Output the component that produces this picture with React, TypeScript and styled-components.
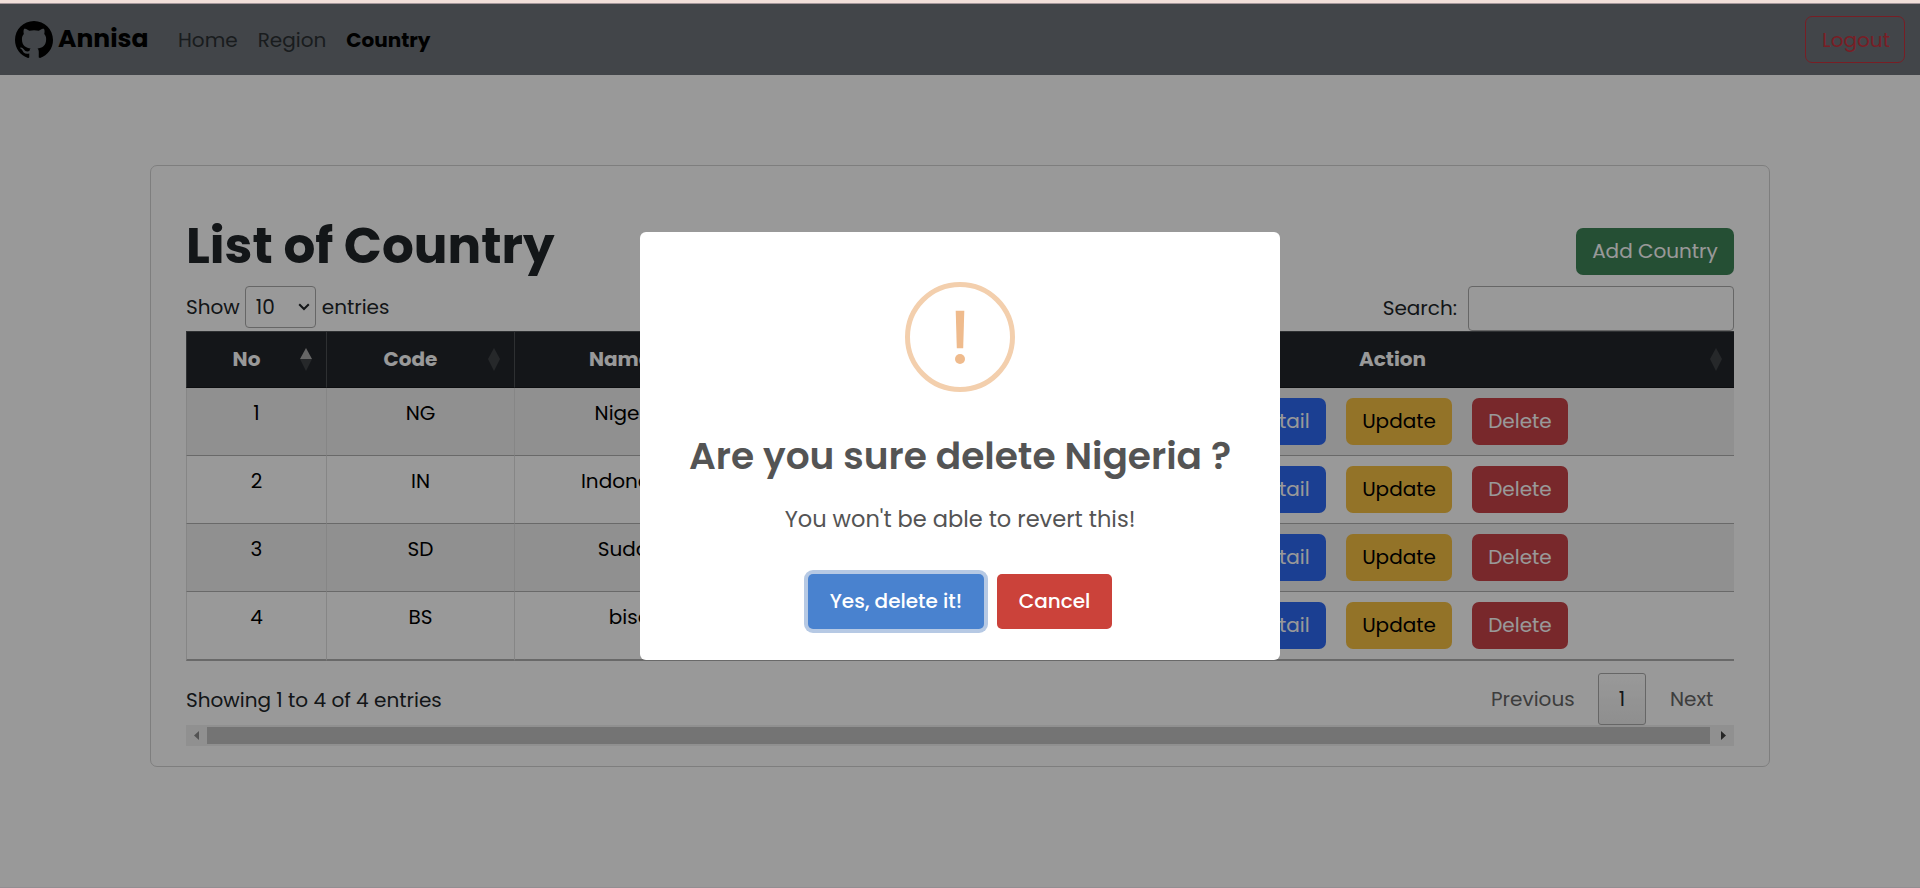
import React from 'react';
import styled, { createGlobalStyle } from 'styled-components';
import { BsGithub } from 'react-icons/bs';

const GlobalStyle = createGlobalStyle`
  *, *::before, *::after { box-sizing: border-box; }
  body {
    margin: 0;
    background: #fff;
    color: #212529;
    font: 400 20px/30px Poppins, Inter, "Open Sans", sans-serif;
    overflow: hidden;
  }
  h1, h2, p { margin: 0; }
  button, select, input {
    font: inherit;
    color: inherit;
  }
`;

const Page = styled.div`
  display: flex;
  flex-direction: column;
  height: 888px;
`;

const TopStrip = styled.div`
  flex: none;
  height: 4px;
  background: #f1dfd9;
  border-bottom: 1px solid #a4969a;
`;

const Navbar = styled.nav`
  flex: none;
  display: flex;
  align-items: center;
  height: 71px;
  padding: 0 15px;
  background: #6e747a;
`;

const Brand = styled.a`
  display: flex;
  align-items: center;
  gap: 5px;
  width: 163px;
  color: #000;
  font-size: 25px;
  font-weight: 700;

  span { margin-top: -2px; }
`;

const NavLinks = styled.div`
  display: flex;
  gap: 20px;
  flex: 1;
`;

const NavLink = styled.a<{ $active?: boolean }>`
  color: ${(p) => (p.$active ? '#000' : '#2b2f32')};
  font-weight: ${(p) => (p.$active ? 700 : 400)};
`;

const LogoutButton = styled.button`
  width: 100px;
  height: 47px;
  padding: 0 0 0 2px;
  border: 1px solid #c8323f;
  border-radius: 7px;
  background: transparent;
  color: #c8323f;
`;

const Main = styled.main`
  flex: 1;
  padding: 90px 150px 0;
  border-bottom: 1px solid #f3edf3;
`;

const Card = styled.section`
  height: 602px;
  padding: 49px 35px 0;
  border: 1px solid #d3d3d3;
  border-radius: 7px;
`;

const TitleRow = styled.header`
  display: flex;
  justify-content: space-between;
  align-items: flex-end;
  height: 60px;
`;

const Title = styled.h1`
  margin-bottom: -1px;
  font-size: 50px;
  font-weight: 700;
  line-height: 60px;
`;

const tones = {
  success: { bg: '#3f8458', fg: '#fff' },
  primary: { bg: '#2e69f3', fg: '#fff' },
  warning: { bg: '#f6c043', fg: '#000' },
  danger: { bg: '#c94349', fg: '#fff' },
};

const Button = styled.button<{ $tone: keyof typeof tones; $width: number }>`
  width: ${(p) => p.$width}px;
  height: 47px;
  padding: 0 0 1px;
  border: 0;
  border-radius: 7px;
  background: ${(p) => tones[p.$tone].bg};
  color: ${(p) => tones[p.$tone].fg};
`;

const Controls = styled.div`
  display: flex;
  justify-content: space-between;
  height: 45px;
  margin-top: 11px;
`;

const LengthControl = styled.label`
  display: flex;
  align-items: center;
  height: 42px;
  gap: 5px;

  span:last-child { margin-left: 1px; }
`;

const LengthSelect = styled.div`
  display: flex;
  align-items: center;
  justify-content: space-between;
  width: 71px;
  height: 42px;
  padding: 0 5px 0 10px;
  border: 1px solid #aaa;
  border-radius: 4px;
`;

const SearchControl = styled.label`
  display: flex;
  align-items: center;
  gap: 11px;

  span { padding-bottom: 1px; }
`;

const SearchInput = styled.input`
  width: 266px;
  height: 45px;
  border: 1px solid #aaa;
  border-radius: 4px;
  background: transparent;
`;

const Table = styled.table`
  width: 1548px;
  table-layout: fixed;
  border-collapse: separate;
  border-spacing: 0;
  text-align: center;
  color: #000;
`;

const HeadCell = styled.th<{ $width: number }>`
  position: relative;
  width: ${(p) => p.$width}px;
  height: 57px;
  padding: 0 20px 2px 0;
  border: solid #4d5154;
  border-width: 1px 0 0 1px;
  border-bottom: 1px solid #16181b;
  background: #22252a;
  color: #fff;
  font-weight: 700;

  &:nth-child(n + 4) { border-left-color: #22252a; }
  &:last-child svg { right: 12px; }
  svg { position: absolute; right: 14px; top: 16px; }
`;

const Row = styled.tr`
  &:nth-child(odd) { background: #f0f0f0; }
  &:last-child td { height: 69px; border-bottom-width: 2px; }
`;

const Cell = styled.td`
  height: 68px;
  padding: 10px 0 0;
  vertical-align: top;
  border-left: 1px solid #e0e0e0;
  border-bottom: 1px solid #b0b0b0;

  &:nth-child(n + 4) { border-left: 0; }
`;

const Actions = styled.div`
  display: flex;
  justify-content: center;
  gap: 20px;
`;

const TableFooter = styled.footer`
  display: flex;
  justify-content: space-between;
  align-items: flex-end;
  height: 64px;
`;

const Info = styled.p`
  padding-bottom: 10px;
`;

const Pagination = styled.div`
  display: flex;
  gap: 2px;
`;

const PageButton = styled.button<{ $width: number; $current?: boolean }>`
  width: ${(p) => p.$width}px;
  height: 52px;
  padding: 0 0 0 ${(p) => (p.$current ? 0 : 21)}px;
  border: 1px solid ${(p) => (p.$current ? '#aaa' : 'transparent')};
  border-radius: 3px;
  background: ${(p) => (p.$current ? 'linear-gradient(#fff, #eee)' : 'transparent')};
  color: ${(p) => (p.$current ? '#212529' : '#666')};
  text-align: ${(p) => (p.$current ? 'center' : 'left')};
`;

const ScrollBar = styled.div`
  display: flex;
  align-items: center;
  height: 21px;
  background: #f1f1f1;
`;

const ScrollArrow = styled.div<{ $width: number; $pad: number; $color: string }>`
  display: flex;
  width: ${(p) => p.$width}px;
  padding-left: ${(p) => p.$pad}px;
  color: ${(p) => p.$color};
`;

const ScrollThumb = styled.div`
  flex: 1;
  height: 17px;
  background: #c1c1c1;
`;

const Overlay = styled.div`
  position: fixed;
  inset: 4px 0 0;
  display: flex;
  align-items: center;
  justify-content: center;
  background: rgba(0, 0, 0, 0.4);
`;

const Dialog = styled.div`
  display: flex;
  flex-direction: column;
  align-items: center;
  width: 640px;
  height: 428px;
  padding-top: 50px;
  border-radius: 6px;
  background: #fff;
  color: #545454;
`;

const DialogTitle = styled.h2`
  margin-top: 42px;
  font-size: 37.5px;
  font-weight: 600;
  line-height: 45px;
  white-space: nowrap;
`;

const DialogText = styled.p`
  margin-top: 25px;
  font-size: 22.5px;
`;

const DialogActions = styled.div`
  display: flex;
  gap: 13px;
  margin-top: 40px;
`;

const DialogButton = styled.button<{ $width: number; $color: string; $focused?: boolean }>`
  width: ${(p) => p.$width}px;
  height: 55px;
  padding: 0 0 1px;
  border: 0;
  border-radius: 5px;
  background: ${(p) => p.$color};
  box-shadow: ${(p) => (p.$focused ? '0 0 0 4px #b6c9e4' : 'none')};
  color: #fff;
  font-weight: 500;
`;

const SortIcon = ({ ascending }: { ascending?: boolean }) => (
  <svg width="12" height="23" viewBox="0 0 12 23">
    <path d="M6 0 L12 11 H0 Z" fill={ascending ? '#aaaaaa' : '#404347'} />
    <path d="M0 11 H12 L6 23 Z" fill="#404347" />
  </svg>
);

const WarningIcon = () => (
  <svg width="110" height="110" viewBox="0 0 110 110">
    <circle cx="55" cy="55" r="52.5" fill="none" stroke="#f3cfad" strokeWidth="5" />
    <path d="M50.7 28.8 H59.3 L58.2 66.2 H51.8 Z" fill="#efbb8d" />
    <circle cx="55" cy="77" r="5" fill="#efbb8d" />
  </svg>
);

const columns = [
  { label: 'No', width: 140 },
  { label: 'Code', width: 188 },
  { label: 'Name', width: 231 },
  { label: '', width: 325 },
  { label: 'Action', width: 664 },
];

const countries = [
  { code: 'NG', name: 'Nigeria' },
  { code: 'IN', name: 'Indonesia' },
  { code: 'SD', name: 'Sudan' },
  { code: 'BS', name: 'bisa' },
];

export default function App() {
  return (
    <Page>
      <GlobalStyle />
      <TopStrip />
      <Navbar>
        <Brand>
          <BsGithub size={38} />
          <span>Annisa</span>
        </Brand>
        <NavLinks>
          <NavLink>Home</NavLink>
          <NavLink>Region</NavLink>
          <NavLink $active>Country</NavLink>
        </NavLinks>
        <LogoutButton>Logout</LogoutButton>
      </Navbar>
      <Main>
        <Card>
          <TitleRow>
            <Title>List of Country</Title>
            <Button $tone="success" $width={158}>Add Country</Button>
          </TitleRow>
          <Controls>
            <LengthControl>
              <span>Show</span>
              <LengthSelect>
                10
                <svg width="12" height="8" viewBox="0 0 12 8" fill="none">
                  <path d="M1.2 1.2 L6 6 L10.8 1.2" stroke="#212529" strokeWidth="2" />
                </svg>
              </LengthSelect>
              <span>entries</span>
            </LengthControl>
            <SearchControl>
              <span>Search:</span>
              <SearchInput />
            </SearchControl>
          </Controls>
          <Table>
            <thead>
              <tr>
                {columns.map((c, i) => (
                  <HeadCell key={i} $width={c.width}>
                    {c.label}
                    <SortIcon ascending={i === 0} />
                  </HeadCell>
                ))}
              </tr>
            </thead>
            <tbody>
              {countries.map((c, i) => (
                <Row key={c.code}>
                  <Cell>{i + 1}</Cell>
                  <Cell>{c.code}</Cell>
                  <Cell>{c.name}</Cell>
                  <Cell />
                  <Cell>
                    <Actions>
                      <Button $tone="primary" $width={90}>Detail</Button>
                      <Button $tone="warning" $width={106}>Update</Button>
                      <Button $tone="danger" $width={96}>Delete</Button>
                    </Actions>
                  </Cell>
                </Row>
              ))}
            </tbody>
          </Table>
          <TableFooter>
            <Info>Showing 1 to 4 of 4 entries</Info>
            <Pagination>
              <PageButton $width={127}>Previous</PageButton>
              <PageButton $width={48} $current>1</PageButton>
              <PageButton $width={86}>Next</PageButton>
            </Pagination>
          </TableFooter>
          <ScrollBar>
            <ScrollArrow $width={21} $pad={8} $color="#8a8a8a">
              <svg width="5" height="9" viewBox="0 0 5 9"><path d="M5 0 V9 L0 4.5 Z" fill="currentColor" /></svg>
            </ScrollArrow>
            <ScrollThumb />
            <ScrollArrow $width={24} $pad={11} $color="#404040">
              <svg width="5" height="9" viewBox="0 0 5 9"><path d="M0 0 V9 L5 4.5 Z" fill="currentColor" /></svg>
            </ScrollArrow>
          </ScrollBar>
        </Card>
      </Main>
      <Overlay>
        <Dialog role="dialog">
          <WarningIcon />
          <DialogTitle>Are you sure delete Nigeria ?</DialogTitle>
          <DialogText>You won't be able to revert this!</DialogText>
          <DialogActions>
            <DialogButton $width={176} $color="#4982cf" $focused>Yes, delete it!</DialogButton>
            <DialogButton $width={115} $color="#cb423a">Cancel</DialogButton>
          </DialogActions>
        </Dialog>
      </Overlay>
    </Page>
  );
}
